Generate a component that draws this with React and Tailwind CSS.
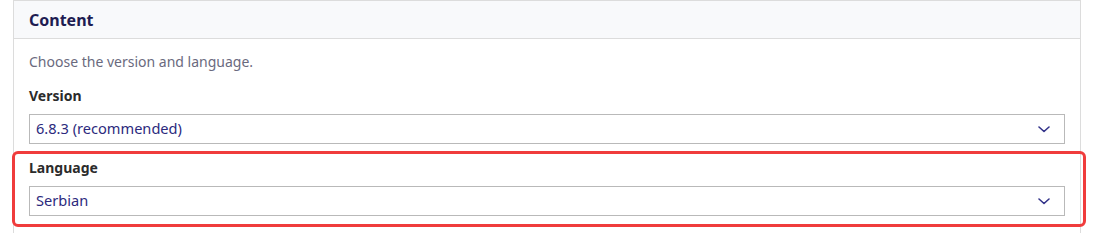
import React from "react";

function Chevron() {
  return (
    <svg width="12" height="7" viewBox="0 0 12 7" fill="none" className="shrink-0">
      <path d="M1 1l5 4.5L11 1" stroke="#33338a" strokeWidth="1.6" strokeLinecap="round" strokeLinejoin="round" />
    </svg>
  );
}

function SelectField({ label, value }) {
  return (
    <div className="flex flex-col">
      <label className="text-[14px] leading-[20px] font-bold text-[#2b2b2b]">{label}</label>
      <div className="mt-[8px] h-[30px] flex items-center justify-between border border-[#b9b9b9] bg-white pl-[6px] pr-[14px]">
        <span className="text-[14.6px] text-[#2c2a7d]">{value}</span>
        <Chevron />
      </div>
    </div>
  );
}

export default function App() {
  return (
    <div className="bg-white h-[233px] overflow-hidden" style={{ fontFamily: '"Noto Sans", sans-serif' }}>
      <div className="ml-[13px] w-[1068px] border border-[#dcdcdc] border-b-0">
        <div className="h-[38px] bg-[#f8f9fb] border-b border-[#dcdcdc] flex items-center px-[15px]">
          <h2 className="text-[16px] font-bold text-[#1e1c52]">Content</h2>
        </div>
        <div className="px-[15px] pt-[13px] pb-[20px] flex flex-col gap-[14px]">
          <p className="text-[14px] leading-[20px] text-[#6a6a7e]">Choose the version and language.</p>
          <SelectField label="Version" value="6.8.3 (recommended)" />
          <div className="relative">
            <SelectField label="Language" value="Serbian" />
            <div className="absolute -top-[7px] -bottom-[11px] -left-[17px] -right-[21px] border-[3.5px] border-[#f03c3c] rounded-[6px] pointer-events-none" />
          </div>
        </div>
      </div>
    </div>
  );
}
